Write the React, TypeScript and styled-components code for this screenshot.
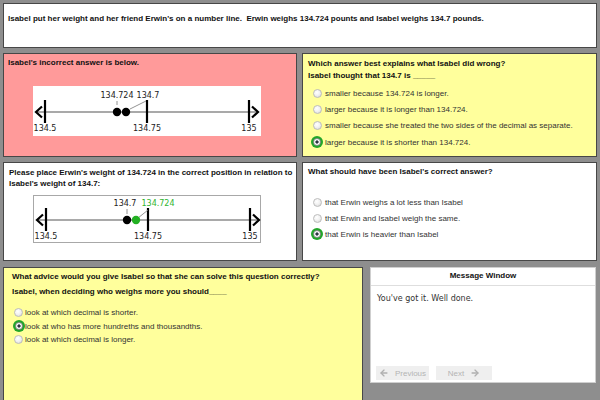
import React from 'react';
import styled, { createGlobalStyle } from 'styled-components';
import { ArrowLeft, ArrowRight } from 'lucide-react';

const Global = createGlobalStyle`
  html, body { margin: 0; padding: 0; }
  body {
    background: #8e8e8e;
    width: 600px;
    height: 400px;
    overflow: hidden;
    font-family: "Liberation Sans", Arial, sans-serif;
  }
`;

const Page = styled.div`
  width: 600px;
  height: 400px;
  box-sizing: border-box;
  padding: 3px 3px 0 3px;
  display: flex;
  flex-direction: column;
  gap: 5px;
  overflow: hidden;
`;

const Panel = styled.div<{ $bg: string; $pad?: string }>`
  box-sizing: border-box;
  background: ${(p) => p.$bg};
  border: 1px solid #474747;
  padding: ${(p) => p.$pad || '4px 5px'};
  min-width: 0;
  overflow: hidden;
`;

const TopPanel = styled(Panel)`
  height: 45px;
  flex-shrink: 0;
`;

const Row = styled.div<{ $cols: string; $h: number; $gap?: number; $mt?: number }>`
  display: grid;
  grid-template-columns: ${(p) => p.$cols};
  column-gap: ${(p) => p.$gap ?? 5}px;
  height: ${(p) => p.$h}px;
  margin-top: ${(p) => p.$mt ?? 0}px;
  flex-shrink: 0;
`;

const Heading = styled.div<{ $lh?: number; $mt?: number }>`
  font-weight: bold;
  font-size: 8px;
  color: #111;
  line-height: ${(p) => p.$lh ?? 12}px;
  margin-top: ${(p) => p.$mt ?? 0}px;
  white-space: nowrap;
`;

const LineBox = styled.div<{ $ml: number; $mt: number; $h: number; $border?: boolean }>`
  box-sizing: border-box;
  width: 228px;
  height: ${(p) => p.$h}px;
  margin-left: ${(p) => p.$ml}px;
  margin-top: ${(p) => p.$mt}px;
  background: #fff;
  border: ${(p) => (p.$border ? '1px solid #a8a8a8' : 'none')};
  svg { display: block; }
`;

const Options = styled.div<{ $mt: number }>`
  margin-top: ${(p) => p.$mt}px;
  display: flex;
  flex-direction: column;
`;

const Option = styled.div<{ $h: number; $pl: number }>`
  display: flex;
  align-items: center;
  height: ${(p) => p.$h}px;
  padding-left: ${(p) => p.$pl}px;
  font-size: 8px;
  color: #333;
  white-space: nowrap;
`;

const RadioWrap = styled.span<{ $w: number }>`
  width: ${(p) => p.$w}px;
  display: flex;
  justify-content: center;
  align-items: center;
  flex-shrink: 0;
`;

const RadioOff = styled.span`
  box-sizing: border-box;
  width: 9px;
  height: 9px;
  border-radius: 50%;
  border: 1px solid #bdbdbd;
  background: radial-gradient(circle at 40% 35%, #ffffff 0%, #f2f2f2 45%, #d2d2d2 100%);
`;

const RadioOn = styled.span`
  box-sizing: border-box;
  width: 12px;
  height: 12px;
  border-radius: 50%;
  background: #22a52a;
  display: flex;
  align-items: center;
  justify-content: center;
  &::before {
    content: '';
    box-sizing: border-box;
    width: 8px;
    height: 8px;
    border-radius: 50%;
    background: radial-gradient(circle, #2b3440 0 1.4px, #ffffff 1.8px);
    border: 1px solid #8a8a8a;
  }
`;

const MsgWindow = styled.div`
  box-sizing: border-box;
  background: #fff;
  border: 1px solid #cfcfcf;
  height: 116px;
  display: flex;
  flex-direction: column;
`;

const MsgHeader = styled.div`
  height: 18px;
  box-sizing: border-box;
  border-bottom: 1px solid #dedede;
  font-weight: bold;
  font-size: 8px;
  color: #111;
  text-align: center;
  line-height: 16px;
`;

const MsgBody = styled.div`
  flex: 1;
  padding: 7px 6px 0 6px;
  font-family: "DejaVu Sans", Verdana, sans-serif;
  font-size: 8px;
  line-height: 11px;
  color: #333;
`;

const MsgFooter = styled.div`
  display: flex;
  gap: 7px;
  padding: 0 5px 2px 5px;
`;

const NavButton = styled.div<{ $w: number }>`
  width: ${(p) => p.$w}px;
  height: 14px;
  background: #efefef;
  color: #b4b4b4;
  font-size: 8px;
  display: flex;
  align-items: center;
  justify-content: center;
  gap: 6px;
`;

type Dot = { x: number; color: string };
type Label = { x: number; text: string; color: string };

const NumberLine: React.FC<{ dy: number; dots: Dot[]; labels: Label[]; leaders: string[] }> = ({ dy, dots, labels, leaders }) => (
  <svg width="228" height="50" viewBox="0 0 228 50">
    <g transform={`translate(0, ${dy})`} fontFamily="'DejaVu Sans', Verdana, sans-serif" fontSize="8">
      <line x1="3" y1="26" x2="225" y2="26" stroke="#8c8c8c" strokeWidth="1.6" />
      <polyline points="9,20.5 3,26 9,31.5" fill="none" stroke="#000" strokeWidth="2.2" />
      <polyline points="219,20.5 225,26 219,31.5" fill="none" stroke="#000" strokeWidth="2.2" />
      {[12, 114, 216].map((x) => (
        <line key={x} x1={x} y1="14" x2={x} y2="37" stroke="#000" strokeWidth="2.2" />
      ))}
      <text x="12" y="45" textAnchor="middle" fill="#222">134.5</text>
      <text x="114" y="45" textAnchor="middle" fill="#222">134.75</text>
      <text x="216" y="45" textAnchor="middle" fill="#222">135</text>
      {leaders.map((d, i) => (
        <path key={i} d={d} stroke="#777" strokeWidth="0.8" fill="none" />
      ))}
      {dots.map((d, i) => (
        <circle key={i} cx={d.x} cy="26" r="4.2" fill={d.color} />
      ))}
      {labels.map((l, i) => (
        <text key={i} x={l.x} y="12" textAnchor="middle" fill={l.color}>{l.text}</text>
      ))}
    </g>
  </svg>
);

type Opt = { text: string; on?: boolean };

const OptionList: React.FC<{ items: Opt[]; mt: number; h: number; pl: number; w: number }> = ({ items, mt, h, pl, w }) => (
  <Options $mt={mt}>
    {items.map((o) => (
      <Option key={o.text} $h={h} $pl={pl}>
        <RadioWrap $w={w}>{o.on ? <RadioOn /> : <RadioOff />}</RadioWrap>
        {o.text}
      </Option>
    ))}
  </Options>
);

export default function App() {
  return (
    <>
      <Global />
      <Page>
        <TopPanel $bg="#ffffff" $pad="9px 4px">
          <Heading $lh={12}>
            Isabel put her weight and her friend Erwin's on a number line.&nbsp; Erwin weighs 134.724 pounts and Isabel weighs 134.7 pounds.
          </Heading>
        </TopPanel>

        <Row $cols="294px 295px" $h={104}>
          <Panel $bg="#ff9a9a" $pad="3px 4px">
            <Heading>Isabel's incorrect answer is below.</Heading>
            <LineBox $ml={25} $mt={17} $h={50}>
              <NumberLine
                dy={0}
                dots={[
                  { x: 84, color: '#000' },
                  { x: 93, color: '#000' },
                ]}
                labels={[
                  { x: 84, text: '134.724', color: '#222' },
                  { x: 115, text: '134.7', color: '#222' },
                ]}
                leaders={['M84 15 L84 19', 'M113 15 L97 23']}
              />
            </LineBox>
          </Panel>
          <Panel $bg="#ffff9c" $pad="4px 5px">
            <Heading>Which answer best explains what Isabel did wrong?</Heading>
            <Heading>Isabel thought that 134.7 is _____</Heading>
            <OptionList
              mt={3}
              h={16.3}
              pl={1}
              w={16}
              items={[
                { text: 'smaller because 134.724 is longer.' },
                { text: 'larger because it is longer than 134.724.' },
                { text: 'smaller because she treated the two sides of the decimal as separate.' },
                { text: 'larger because it is shorter than 134.724.', on: true },
              ]}
            />
          </Panel>
        </Row>

        <Row $cols="294px 295px" $h={99}>
          <Panel $bg="#ffffff" $pad="4px 5px">
            <Heading $lh={11}>Please place Erwin's weight of 134.724 in the correct position in relation to</Heading>
            <Heading $lh={11}>Isabel's weight of 134.7:</Heading>
            <LineBox $ml={24} $mt={6} $h={48} $border>
              <NumberLine
                dy={-2}
                dots={[
                  { x: 93, color: '#000' },
                  { x: 102, color: '#22b022' },
                ]}
                labels={[
                  { x: 91, text: '134.7', color: '#222' },
                  { x: 124, text: '134.724', color: '#2fb52f' },
                ]}
                leaders={['M93 15 L93 20', 'M114 16 L104 24']}
              />
            </LineBox>
          </Panel>
          <Panel $bg="#ffffff" $pad="3px 5px">
            <Heading $lh={11}>What should have been Isabel's correct answer?</Heading>
            <OptionList
              mt={17}
              h={16}
              pl={1}
              w={16}
              items={[
                { text: 'that Erwin weighs a lot less than Isabel' },
                { text: 'that Erwin and Isabel weigh the same.' },
                { text: 'that Erwin is heavier than Isabel', on: true },
              ]}
            />
          </Panel>
        </Row>

        <Row $cols="360px 226px" $h={140} $gap={7} $mt={1}>
          <Panel $bg="#ffff9c" $pad="2px 8px">
            <Heading $lh={14}>What advice would you give Isabel so that she can solve this question correctly?</Heading>
            <Heading $lh={14} $mt={1}>Isabel, when deciding who weighs more you should____</Heading>
            <OptionList
              mt={7}
              h={13.5}
              pl={0}
              w={13}
              items={[
                { text: 'look at which decimal is shorter.' },
                { text: 'look at who has more hundreths and thousandths.', on: true },
                { text: 'look at which decimal is longer.' },
              ]}
            />
          </Panel>
          <MsgWindow>
            <MsgHeader>Message Window</MsgHeader>
            <MsgBody>You've got it. Well done.</MsgBody>
            <MsgFooter>
              <NavButton $w={53}>
                <ArrowLeft size={10} strokeWidth={3.2} color="#b0b0b0" />
                Previous
              </NavButton>
              <NavButton $w={56}>
                Next
                <ArrowRight size={10} strokeWidth={3.2} color="#b0b0b0" />
              </NavButton>
            </MsgFooter>
          </MsgWindow>
        </Row>
      </Page>
    </>
  );
}
